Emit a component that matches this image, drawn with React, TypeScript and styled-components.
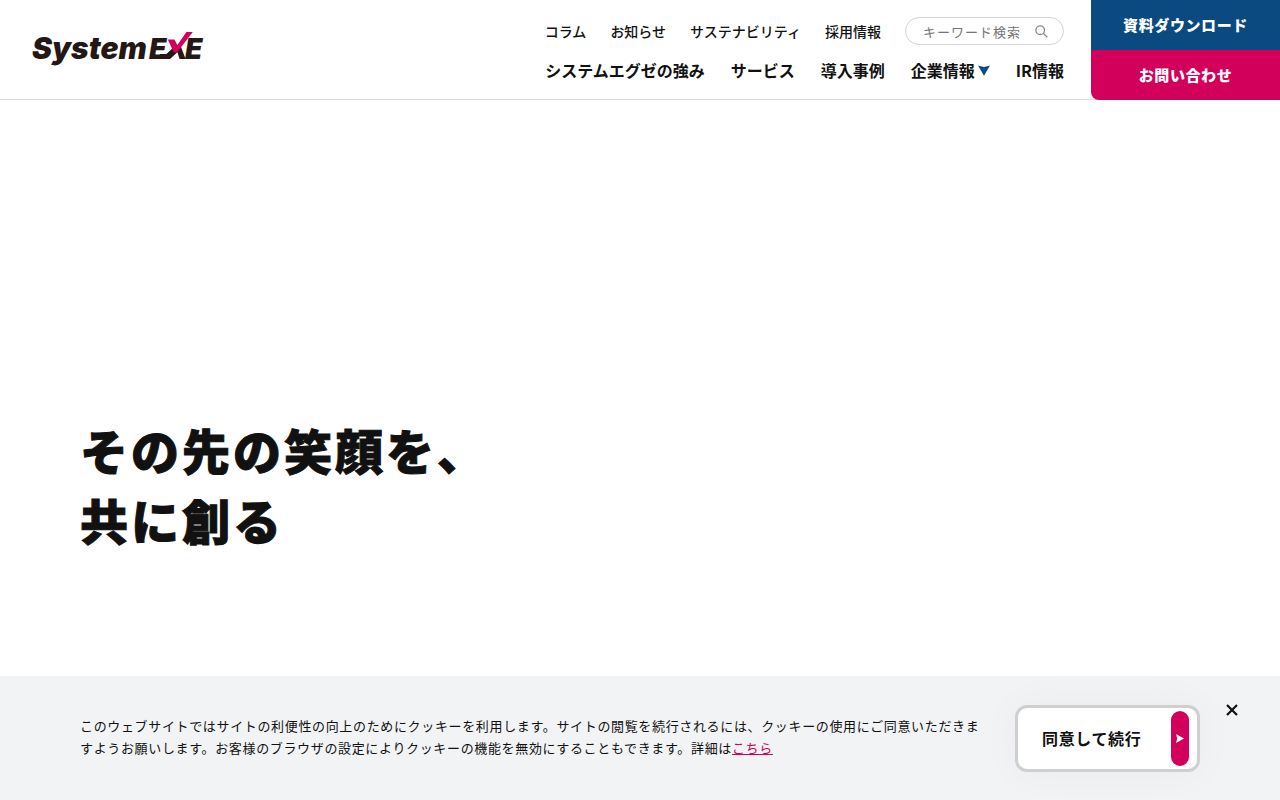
import React from "react";
import styled, { createGlobalStyle } from "styled-components";

const NAVY = "#0a4a80";
const PINK = "#d3005b";
const INK = "#111";

const GlobalStyle = createGlobalStyle`
  *, *::before, *::after { box-sizing: border-box; }
  body {
    margin: 0;
    background: #fff;
    color: ${INK};
    font-family: "Noto Sans CJK JP", "Noto Sans", sans-serif;
  }
  button, input { font: inherit; letter-spacing: inherit; color: inherit; }
  a { color: inherit; text-decoration: none; }
`;

const Page = styled.div`
  display: flex;
  flex-direction: column;
  min-height: 100vh;
`;

const Header = styled.header`
  display: flex;
  align-items: stretch;
  height: 100px;
  background: linear-gradient(#dcdcdc, #dcdcdc) bottom / 100% 1px no-repeat #fff;
`;

const LogoLink = styled.a`
  align-self: flex-start;
  margin: 31px auto 0 32px;
  line-height: 0;
`;

const LogoText = styled.text`
  font-family: Inter, sans-serif;
  font-weight: 900;
  font-style: italic;
  fill: #231815;
`;

const Navs = styled.div`
  display: flex;
  flex-direction: column;
  align-items: flex-end;
  gap: 13px;
  padding: 17px 27px 0 0;
`;

const NavRow = styled.nav<{ $gap: number }>`
  display: flex;
  align-items: center;
  gap: ${(p) => p.$gap}px;
`;

const SubLink = styled.a`
  font-size: 14px;
  font-weight: 500;
  line-height: 28px;
`;

const MainLink = styled.a`
  display: flex;
  align-items: center;
  gap: 3px;
  font-size: 16px;
  font-weight: 700;
  line-height: 24px;
`;

const SearchForm = styled.form`
  display: flex;
  align-items: center;
  width: 159px;
  height: 28px;
  padding: 0 15px 0 17px;
  border: 1px solid #d4d4d4;
  border-radius: 14px;
`;

const SearchInput = styled.input`
  flex: 1;
  min-width: 0;
  height: 24px;
  padding: 0;
  border: 0;
  outline: 0;
  background: none;
  font-size: 13px;
  letter-spacing: 1px;
  &::placeholder { color: #757575; opacity: 1; }
`;

const IconButton = styled.button`
  display: flex;
  align-items: center;
  justify-content: center;
  padding: 0;
  border: 0;
  background: none;
  cursor: pointer;
`;

const CtaColumn = styled.div`
  display: flex;
  flex-direction: column;
  width: 189px;
  border-bottom-left-radius: 8px;
  overflow: hidden;
`;

const Cta = styled.a<{ $color: string }>`
  display: flex;
  flex: 1;
  align-items: center;
  justify-content: center;
  padding-bottom: 2px;
  background: ${(p) => p.$color};
  color: #fff;
  font-size: 15px;
  font-weight: 900;
  letter-spacing: 0.04em;
`;

const Hero = styled.main`
  display: flex;
  flex: 1;
  align-items: flex-end;
  padding: 0 80px 122px;
`;

const Headline = styled.h1`
  margin: 0;
  font-size: 48px;
  font-weight: 900;
  line-height: 70px;
  letter-spacing: 3px;
  -webkit-text-stroke: 1px ${INK};
`;

const CookieBar = styled.section`
  display: flex;
  align-items: flex-start;
  min-height: 124px;
  padding: 29px 40px 28px 80px;
  background: #f1f3f5;
`;

const CookieText = styled.p`
  flex: 1;
  margin: 10px 31px 0 0;
  font-size: 13px;
  line-height: 22px;
  letter-spacing: 0.05em;
`;

const PolicyLink = styled.a`
  color: ${PINK};
  text-decoration: underline;
`;

const AcceptButton = styled.button`
  display: flex;
  align-items: center;
  justify-content: space-between;
  width: 185px;
  height: 67px;
  padding: 0 8px 0 24px;
  border: 3px solid #cfcfcf;
  border-radius: 12px;
  background: #fff;
  box-shadow: 0 0 40px rgba(0, 0, 0, 0.04);
  font-size: 16px;
  font-weight: 700;
  letter-spacing: 0.04em;
  cursor: pointer;
`;

const AcceptLabel = styled.span`
  padding-bottom: 2px;
`;

const Pill = styled.span`
  display: flex;
  align-items: center;
  justify-content: center;
  width: 18px;
  height: 55px;
  border-radius: 9px;
  background: ${PINK};
`;

const CloseButton = styled(IconButton)`
  width: 16px;
  height: 10px;
  margin-left: 24px;
`;

const Logo = () => (
  <svg width="172" height="40" viewBox="0 0 172 40" overflow="visible" role="img" aria-label="System EXE">
    <LogoText x="0" y="28" fontSize="30">System</LogoText>
    <LogoText x="117" y="28" fontSize="28">E</LogoText>
    <LogoText x="153" y="28" fontSize="28">E</LogoText>
    <path d="M128 23H134.4L142.8 15.2L147 19.8L138 28H127Z" fill="#231815" />
    <path d="M144.4 18L148.4 14.2L153.6 28H147.6Z" fill="#231815" />
    <path d="M135.8 8.4H142.4L145.4 14L154.4 1H160.8L145 21.6L141.8 21.4Z" fill="#d3005b" />
  </svg>
);

const SearchIcon = () => (
  <svg width="13" height="13" viewBox="0 0 13 13" fill="none" stroke="#888" strokeWidth="1.3" aria-hidden="true">
    <circle cx="5.2" cy="5.2" r="4.3" />
    <path d="M8.4 8.4L12.3 12.3" />
  </svg>
);

const DownIcon = () => (
  <svg width="12" height="11" viewBox="0 0 12 11" aria-hidden="true">
    <path d="M0 0.5L6 2L12 0.5L6 10.8Z" fill={NAVY} />
  </svg>
);

const ForwardIcon = () => (
  <svg width="8" height="9" viewBox="0 0 8 9" aria-hidden="true">
    <path d="M0 0L8 4.5L0 9L1.2 4.5Z" fill="#fff" />
  </svg>
);

const CloseIcon = () => (
  <svg width="12" height="12" viewBox="0 0 12 12" stroke={INK} strokeWidth="2.2" aria-hidden="true">
    <path d="M1 1L11 11M11 1L1 11" />
  </svg>
);

const subLinks = ["コラム", "お知らせ", "サステナビリティ", "採用情報"];
const mainLinks = [
  { label: "システムエグゼの強み" },
  { label: "サービス" },
  { label: "導入事例" },
  { label: "企業情報", hasMenu: true },
  { label: "IR情報" },
];

export default function App() {
  return (
    <Page lang="ja">
      <GlobalStyle />
      <Header>
        <LogoLink href="#">
          <Logo />
        </LogoLink>
        <Navs>
          <NavRow $gap={24} aria-label="サブメニュー">
            {subLinks.map((label) => (
              <SubLink href="#" key={label}>{label}</SubLink>
            ))}
            <SearchForm role="search" onSubmit={(e) => e.preventDefault()}>
              <SearchInput type="text" placeholder="キーワード検索" aria-label="キーワード検索" />
              <IconButton type="submit" aria-label="検索">
                <SearchIcon />
              </IconButton>
            </SearchForm>
          </NavRow>
          <NavRow $gap={26} aria-label="メインメニュー">
            {mainLinks.map(({ label, hasMenu }) => (
              <MainLink href="#" key={label}>
                {label}
                {hasMenu && <DownIcon />}
              </MainLink>
            ))}
          </NavRow>
        </Navs>
        <CtaColumn>
          <Cta href="#" $color={NAVY}>資料ダウンロード</Cta>
          <Cta href="#" $color={PINK}>お問い合わせ</Cta>
        </CtaColumn>
      </Header>
      <Hero>
        <Headline>
          その先の笑顔を、
          <br />
          共に創る
        </Headline>
      </Hero>
      <CookieBar aria-label="クッキーの使用について">
        <CookieText>
          このウェブサイトではサイトの利便性の向上のためにクッキーを利用します。サイトの閲覧を続行されるには、クッキーの使用にご同意いただきますようお願いします。お客様のブラウザの設定によりクッキーの機能を無効にすることもできます。詳細は<PolicyLink href="#">こちら</PolicyLink>
        </CookieText>
        <AcceptButton type="button">
          <AcceptLabel>同意して続行</AcceptLabel>
          <Pill>
            <ForwardIcon />
          </Pill>
        </AcceptButton>
        <CloseButton type="button" aria-label="閉じる">
          <CloseIcon />
        </CloseButton>
      </CookieBar>
    </Page>
  );
}
